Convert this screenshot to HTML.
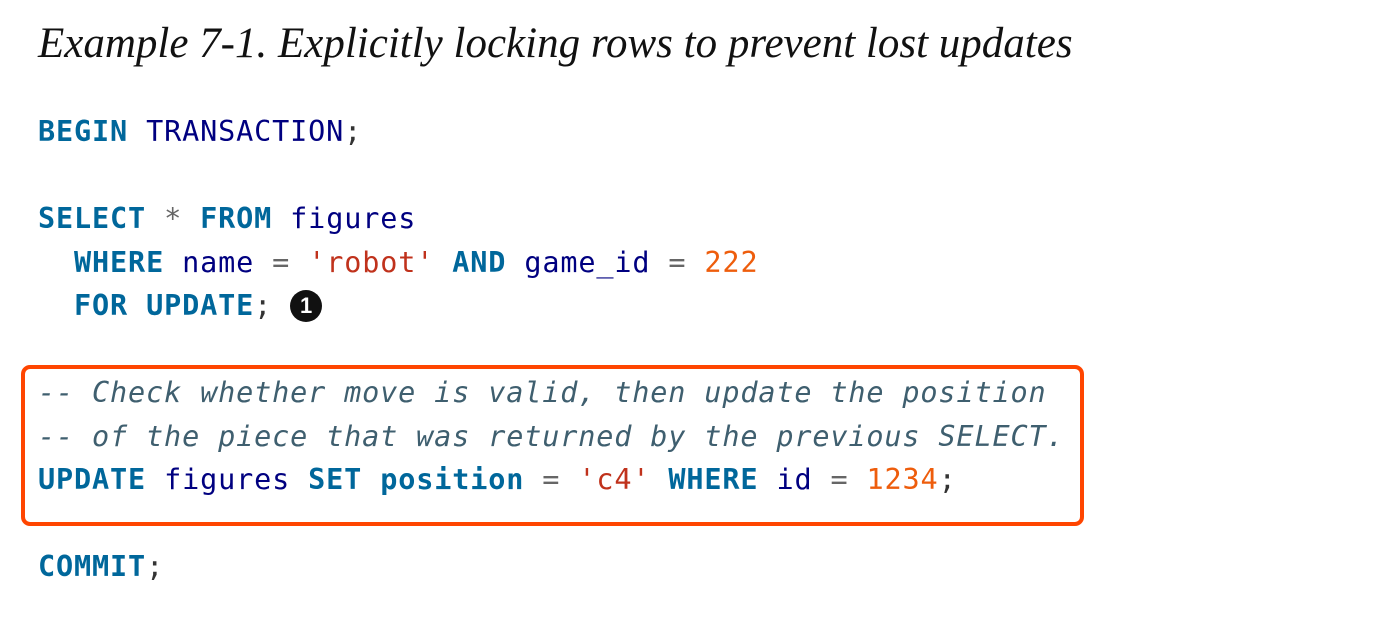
<!DOCTYPE html>
<html><head><meta charset="utf-8"><style>
body{margin:0;width:1390px;height:624px;background:#fff;position:relative;overflow:hidden}
.t{position:absolute;left:38px;top:19px;font:italic 43px "Liberation Serif",serif;color:#111;white-space:nowrap}
pre{position:absolute;left:38px;top:110px;margin:0;font:28.5px/43.5px "DejaVu Sans Mono","Liberation Mono",monospace;color:#333;letter-spacing:0.85px}
.k{color:#00679b;font-weight:bold}.n{color:#000080}.s{color:#c0321c}.m{color:#ee5d0c}.o{color:#666}.c{color:#3f5f6f;font-style:italic}
.box{position:absolute;left:21px;top:365px;width:1055px;height:153px;border:4px solid #ff4500;border-radius:9px}
.b{display:inline-block;width:32px;height:32px;border-radius:50%;background:#111;color:#fff;font:bold 22px/32px "Liberation Sans",sans-serif;text-align:center;vertical-align:2px;letter-spacing:0}
</style></head><body>
<div class="t">Example 7-1. Explicitly locking rows to prevent lost updates</div>
<div class="box"></div>
<pre><span class="k">BEGIN</span> <span class="n">TRANSACTION</span>;

<span class="k">SELECT</span> <span class="o">*</span> <span class="k">FROM</span> <span class="n">figures</span>
  <span class="k">WHERE</span> <span class="n">name</span> <span class="o">=</span> <span class="s">'robot'</span> <span class="k">AND</span> <span class="n">game_id</span> <span class="o">=</span> <span class="m">222</span>
  <span class="k">FOR</span> <span class="k">UPDATE</span>; <span class="b">1</span>

<span class="c">-- Check whether move is valid, then update the position</span>
<span class="c">-- of the piece that was returned by the previous SELECT.</span>
<span class="k">UPDATE</span> <span class="n">figures</span> <span class="k">SET</span> <span class="k">position</span> <span class="o">=</span> <span class="s">'c4'</span> <span class="k">WHERE</span> <span class="n">id</span> <span class="o">=</span> <span class="m">1234</span>;

<span class="k">COMMIT</span>;</pre>
</body></html>
